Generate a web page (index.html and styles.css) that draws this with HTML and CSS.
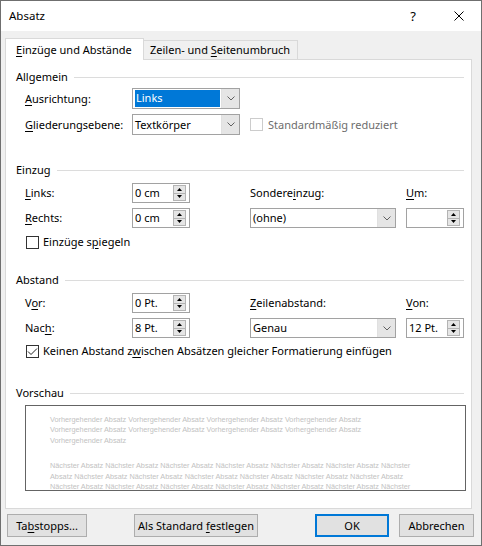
FILE: index.html
```html
<!DOCTYPE html>
<html lang="de">
<head>
<meta charset="utf-8">
<title>Absatz</title>
<link rel="stylesheet" href="styles.css">
</head>
<body>
<div class="dialog">
  <header class="titlebar">
    <span class="title">Absatz</span>
    <span class="caption-btn help">?</span>
    <span class="caption-btn close">
      <svg width="10" height="10" viewBox="0 0 10 10"><path d="M0.5 0.5 L9.5 9.5 M9.5 0.5 L0.5 9.5" stroke="#000" stroke-width="1" fill="none"/></svg>
    </span>
  </header>

  <div class="body">
    <div class="tabs">
      <div class="tab active"><span><u>E</u>inzüge und Abstände</span></div>
      <div class="tab"><span>Zeilen- und <u>S</u>eitenumbruch</span></div>
    </div>

    <div class="panel">
      <section class="group group-general">
        <h2 class="group-title"><span>Allgemein</span></h2>
        <div class="general-grid">
          <label class="lbl"><u>A</u>usrichtung:</label>
          <div class="combo narrow">
            <span class="field"><span class="selected">Links</span></span>
            <span class="drop"><svg width="8" height="5" viewBox="0 0 8 5"><polyline points="0.5,0.5 4,4 7.5,0.5" fill="none" stroke="#606060" stroke-width="1"/></svg></span>
          </div>
          <span></span>

          <label class="lbl"><u>G</u>liederungsebene:</label>
          <div class="combo narrow">
            <span class="field">Textkörper</span>
            <span class="drop"><svg width="8" height="5" viewBox="0 0 8 5"><polyline points="0.5,0.5 4,4 7.5,0.5" fill="none" stroke="#606060" stroke-width="1"/></svg></span>
          </div>
          <label class="check disabled"><span class="box"></span><span>Standardmäßig reduziert</span></label>
        </div>
      </section>

      <section class="group group-indent">
        <h2 class="group-title"><span>Einzug</span></h2>
        <div class="measure-grid">
          <label class="lbl"><u>L</u>inks:</label>
          <div class="spin">
            <span class="field">0 cm</span>
            <span class="spin-btns">
              <span class="spin-btn"><svg width="5" height="3" viewBox="0 0 5 3"><polygon points="2.5,0 5,3 0,3" fill="#000"/></svg></span>
              <span class="spin-btn"><svg width="5" height="3" viewBox="0 0 5 3"><polygon points="0,0 5,0 2.5,3" fill="#000"/></svg></span>
            </span>
          </div>
          <label class="lbl col-3">Sondere<u>i</u>nzug:</label>
          <label class="lbl col-4"><u>U</u>m:</label>

          <label class="lbl"><u>R</u>echts:</label>
          <div class="spin">
            <span class="field">0 cm</span>
            <span class="spin-btns">
              <span class="spin-btn"><svg width="5" height="3" viewBox="0 0 5 3"><polygon points="2.5,0 5,3 0,3" fill="#000"/></svg></span>
              <span class="spin-btn"><svg width="5" height="3" viewBox="0 0 5 3"><polygon points="0,0 5,0 2.5,3" fill="#000"/></svg></span>
            </span>
          </div>
          <div class="combo wide col-3">
            <span class="field">(ohne)</span>
            <span class="drop"><svg width="8" height="5" viewBox="0 0 8 5"><polyline points="0.5,0.5 4,4 7.5,0.5" fill="none" stroke="#606060" stroke-width="1"/></svg></span>
          </div>
          <div class="spin col-4">
            <span class="field"></span>
            <span class="spin-btns">
              <span class="spin-btn"><svg width="5" height="3" viewBox="0 0 5 3"><polygon points="2.5,0 5,3 0,3" fill="#000"/></svg></span>
              <span class="spin-btn"><svg width="5" height="3" viewBox="0 0 5 3"><polygon points="0,0 5,0 2.5,3" fill="#000"/></svg></span>
            </span>
          </div>
        </div>
        <label class="check row-check mirror"><span class="box"></span><span>Einzüge s<u>p</u>iegeln</span></label>
      </section>

      <section class="group group-spacing">
        <h2 class="group-title"><span>Abstand</span></h2>
        <div class="measure-grid">
          <label class="lbl">V<u>o</u>r:</label>
          <div class="spin">
            <span class="field">0 Pt.</span>
            <span class="spin-btns">
              <span class="spin-btn"><svg width="5" height="3" viewBox="0 0 5 3"><polygon points="2.5,0 5,3 0,3" fill="#000"/></svg></span>
              <span class="spin-btn"><svg width="5" height="3" viewBox="0 0 5 3"><polygon points="0,0 5,0 2.5,3" fill="#000"/></svg></span>
            </span>
          </div>
          <label class="lbl col-3"><u>Z</u>eilenabstand:</label>
          <label class="lbl col-4"><u>V</u>on:</label>

          <label class="lbl">Nac<u>h</u>:</label>
          <div class="spin">
            <span class="field">8 Pt.</span>
            <span class="spin-btns">
              <span class="spin-btn"><svg width="5" height="3" viewBox="0 0 5 3"><polygon points="2.5,0 5,3 0,3" fill="#000"/></svg></span>
              <span class="spin-btn"><svg width="5" height="3" viewBox="0 0 5 3"><polygon points="0,0 5,0 2.5,3" fill="#000"/></svg></span>
            </span>
          </div>
          <div class="combo wide col-3">
            <span class="field">Genau</span>
            <span class="drop"><svg width="8" height="5" viewBox="0 0 8 5"><polyline points="0.5,0.5 4,4 7.5,0.5" fill="none" stroke="#606060" stroke-width="1"/></svg></span>
          </div>
          <div class="spin col-4">
            <span class="field">12 Pt.</span>
            <span class="spin-btns">
              <span class="spin-btn"><svg width="5" height="3" viewBox="0 0 5 3"><polygon points="2.5,0 5,3 0,3" fill="#000"/></svg></span>
              <span class="spin-btn"><svg width="5" height="3" viewBox="0 0 5 3"><polygon points="0,0 5,0 2.5,3" fill="#000"/></svg></span>
            </span>
          </div>
        </div>
        <label class="check row-check no-space">
          <span class="box checked"><svg width="11" height="11" viewBox="0 0 11 11"><polyline points="1,5.5 4,8.5 10,2.5" fill="none" stroke="#222" stroke-width="1"/></svg></span>
          <span>Keinen Abstand z<u>w</u>ischen Absätzen gleicher Formatierung einfügen</span>
        </label>
      </section>

      <section class="group group-preview">
        <h2 class="group-title"><span>Vorschau</span></h2>
        <div class="preview">
          <p class="sample">Vorhergehender Absatz Vorhergehender Absatz Vorhergehender Absatz Vorhergehender Absatz<br>Vorhergehender Absatz Vorhergehender Absatz Vorhergehender Absatz Vorhergehender Absatz<br>Vorhergehender Absatz</p>
          <p class="sample next">Nächster Absatz Nächster Absatz Nächster Absatz Nächster Absatz Nächster Absatz Nächster Absatz Nächster<br>Absatz Nächster Absatz Nächster Absatz Nächster Absatz Nächster Absatz Nächster Absatz Nächster Absatz<br>Nächster Absatz Nächster Absatz Nächster Absatz Nächster Absatz Nächster Absatz Nächster Absatz Nächster</p>
        </div>
      </section>
    </div>

    <div class="buttons">
      <button class="btn tabs-btn">Ta<u>b</u>stopps...</button>
      <button class="btn default-btn">Als Standard <u>f</u>estlegen</button>
      <button class="btn ok-btn">OK</button>
      <button class="btn cancel-btn">Abbrechen</button>
    </div>
  </div>
</div>
</body>
</html>
```

FILE: styles.css
```css
* {
  box-sizing: border-box;
}

html,
body {
  margin: 0;
  padding: 0;
}

body {
  width: 482px;
  height: 546px;
  font-family: "Noto Sans", "Open Sans", sans-serif;
  font-size: 11px;
  line-height: 16px;
  color: #000;
  background: #fff;
  overflow: hidden;
}

u {
  text-decoration: underline;
  text-decoration-thickness: 1px;
  text-underline-offset: 2px;
}

/* Window frame */
.dialog {
  width: 482px;
  height: 546px;
  border: 1px solid #6f6f6f;
  background: #f0f0f0;
  display: flex;
  flex-direction: column;
}

.titlebar {
  height: 30px;
  flex: none;
  background: #fff;
  display: flex;
  align-items: center;
  padding-left: 8px;
  font-size: 11.5px;
}

.title {
  flex: 1;
}

.caption-btn {
  width: 46px;
  height: 30px;
  display: flex;
  align-items: center;
  justify-content: center;
}

.help {
  font-size: 13px;
}

.close {
  width: 45px;
}

/* Client area */
.body {
  flex: 1;
  padding: 7px 4px 0 4px;
}

.tabs {
  display: flex;
  align-items: flex-end;
  height: 21px;
}

.tab {
  position: relative;
  height: 19px;
  border: 1px solid #d9d9d9;
  border-bottom: none;
  background: #f0f0f0;
  padding: 0 6px 0 6px;
  display: flex;
  align-items: center;
  white-space: nowrap;
}

.tab + .tab {
  border-left: none;
  width: 154px;
}

.tab.active {
  height: 22px;
  margin-bottom: -1px;
  width: 139px;
  padding-left: 10px;
  padding-top: 1px;
  background: #fff;
  z-index: 1;
}

.panel {
  width: 467px;
  height: 450px;
  background: #fff;
  border: 1px solid #d9d9d9;
  padding: 9px 7px 0 10px;
}

/* Group boxes */
.group-title {
  margin: 0;
  font-size: 11px;
  font-weight: normal;
  height: 16px;
  display: flex;
  align-items: center;
}

.group-title::after {
  content: "";
  flex: 1;
  height: 1px;
  background: #dcdcdc;
  margin-left: 6px;
}

.group-indent {
  margin-top: 27px;
}

.group-spacing {
  margin-top: 22px;
}

.group-preview {
  margin-top: 26px;
}

.lbl {
  align-self: center;
  white-space: nowrap;
}

.general-grid {
  display: grid;
  grid-template-columns: 107px 118px auto;
  grid-auto-rows: 21px;
  row-gap: 5px;
  margin: 3px 0 0 9px;
}

.measure-grid {
  display: grid;
  grid-template-columns: 107px 118px 156px 58px;
  grid-auto-rows: 20px;
  row-gap: 5px;
  margin: 5px 0 0 9px;
}

.col-3 {
  grid-column: 3;
}

.col-4 {
  grid-column: 4;
}

/* Combo boxes */
.combo {
  display: flex;
  height: 21px;
  border: 1px solid #a2a2a2;
  background: #fff;
}

.combo.narrow {
  width: 108px;
}

.combo.wide {
  width: 146px;
  height: 20px;
}

.combo .field {
  flex: 1;
  padding: 1px 1px 1px 2px;
  display: flex;
  align-items: center;
  white-space: nowrap;
}

.combo .selected {
  display: block;
  width: 100%;
  height: 100%;
  background: #0078d7;
  color: #fff;
  padding-left: 1px;
  line-height: 16px;
}

.drop {
  width: 18px;
  background: #e5e5e5;
  border-left: 1px solid #e0e0e0;
  display: flex;
  align-items: center;
  justify-content: center;
}

/* Spin boxes */
.spin {
  width: 58px;
  height: 20px;
  border: 1px solid #a2a2a2;
  background: #fff;
  display: flex;
  align-items: center;
}

.spin .field {
  flex: 1;
  padding-left: 2px;
  white-space: nowrap;
}

.spin-btns {
  width: 13px;
  height: 16px;
  margin-right: 3px;
  display: flex;
  flex-direction: column;
}

.spin-btn {
  flex: 1;
  background: #e5e5e5;
  border: 1px solid #b4b4b4;
  display: flex;
  align-items: center;
  justify-content: center;
}

.spin-btn + .spin-btn {
  border-top: none;
}

/* Check boxes */
.check {
  display: flex;
  align-items: center;
  white-space: nowrap;
  height: 16px;
  align-self: center;
}

.box {
  width: 13px;
  height: 13px;
  border: 1px solid #333;
  background: #fff;
  margin-right: 4px;
  display: flex;
  align-items: center;
  justify-content: center;
  flex: none;
}

.check.disabled {
  color: #6d6d6d;
}

.check.disabled .box {
  border-color: #cccccc;
  margin-right: 5px;
}

.row-check {
  margin-left: 10px;
}

.mirror {
  margin-top: 6px;
}

.no-space {
  margin-top: 5px;
}

/* Preview */
.preview {
  margin: 4px 0 0 9px;
  width: 441px;
  height: 86px;
  border: 1px solid #646464;
  background: #fff;
  padding: 9px 0 0 24px;
  overflow: hidden;
}

.sample {
  margin: 0;
  font-family: "Liberation Sans", sans-serif;
  font-size: 7.3px;
  line-height: 10.4px;
  color: #c2c2c2;
  white-space: nowrap;
}

.sample.next {
  margin-top: 15px;
}

/* Bottom buttons */
.buttons {
  display: flex;
  margin-top: 5px;
  padding-left: 2px;
}

.btn {
  display: block;
  height: 23px;
  font: inherit;
  line-height: 20px;
  text-align: center;
  white-space: nowrap;
  color: #000;
  background: #e1e1e1;
  border: 1px solid #adadad;
  padding: 0;
}

.tabs-btn {
  width: 80px;
}

.default-btn {
  width: 124px;
  margin-left: 47px;
}

.ok-btn {
  width: 74px;
  margin-left: 57px;
  border-color: #0078d7;
  box-shadow: inset 0 0 0 1px #0078d7;
}

.cancel-btn {
  width: 75px;
  margin-left: 10px;
}
```
